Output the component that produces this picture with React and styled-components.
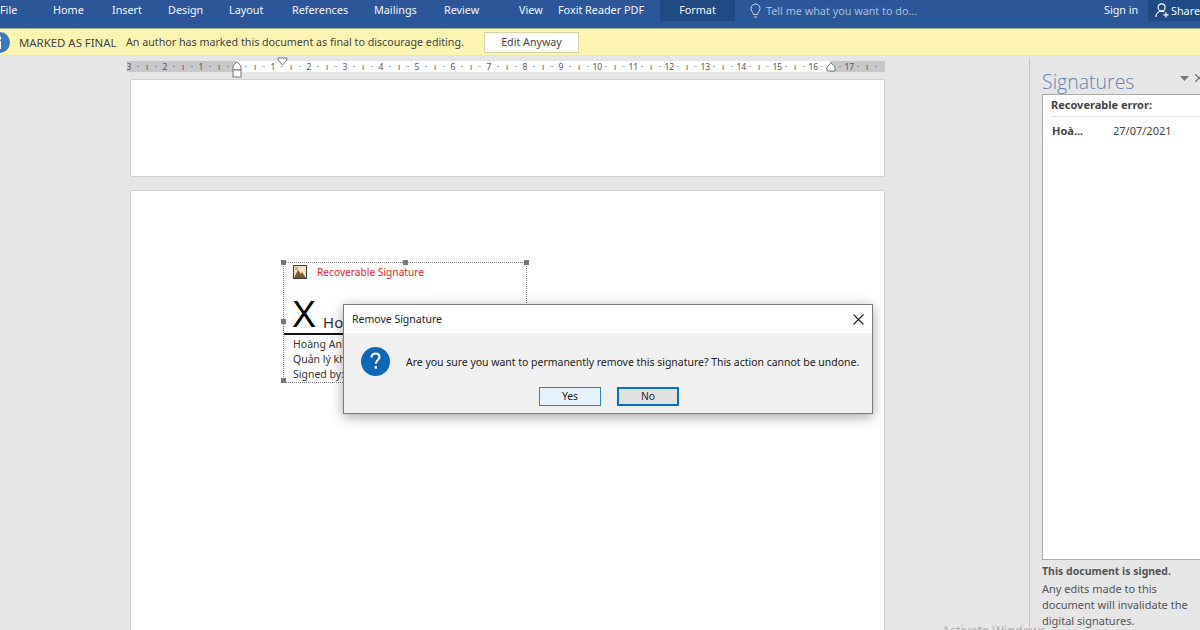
import styled, { createGlobalStyle } from "styled-components";

const GlobalStyle = createGlobalStyle`
  html, body { margin: 0; padding: 0; background: #e6e6e6; }
  * { box-sizing: border-box; }
`;

const Window = styled.div`
  position: relative;
  width: 1200px;
  height: 630px;
  overflow: hidden;
  display: flex;
  flex-direction: column;
  background: #e6e6e6;
  font-family: "Noto Sans", "Liberation Sans", sans-serif;
  color: #444;
`;

// ribbon tabs
const TabBar = styled.div`
  flex: none;
  height: 28px;
  display: flex;
  align-items: flex-start;
  background: #2b579a;
  color: #f2f5fa;
  font-size: 10.8px;
`;

const Tab = styled.div`
  flex: none;
  width: ${(props) => props.$w}px;
  height: 21px;
  line-height: 20px;
  white-space: nowrap;
  text-align: ${(props) => (props.$active ? "center" : "left")};
  background: ${(props) => (props.$active ? "#1f4a85" : "transparent")};
`;

const TellMe = styled.div`
  flex: 1;
  display: flex;
  align-items: center;
  gap: 5px;
  height: 21px;
  padding-left: 15px;
  color: #a9bcd8;
`;

const SignIn = styled.div`
  flex: none;
  width: 44px;
  line-height: 20px;
`;

const Share = styled.div`
  flex: none;
  width: 52px;
  height: 21px;
  display: flex;
  align-items: center;
  gap: 2px;
  padding-left: 7px;
  background: #1f4a85;
`;

// yellow message bar
const MessageBar = styled.div`
  flex: none;
  height: 28px;
  display: flex;
  align-items: center;
  background: #fcf5b1;
  border-top: 1px solid #9db08c;
  border-bottom: 1px solid #efe8a8;
  font-size: 10.7px;
  color: #444;
`;

const InfoIcon = styled.svg`
  flex: none;
  width: 21px;
  height: 21px;
  margin-left: -11px;
  margin-right: 9px;
`;

const FinalLabel = styled.span`
  width: 107px;
  white-space: nowrap;
  font-size: 11.4px;
`;

const FinalText = styled.span`
  width: 358px;
  white-space: nowrap;
`;

const EditButton = styled.div`
  width: 95px;
  height: 21px;
  line-height: 19px;
  text-align: center;
  background: #fff;
  border: 1px solid #d9d4a6;
`;

const Main = styled.div`
  flex: 1;
  min-height: 0;
  display: flex;
`;

const Work = styled.div`
  flex: none;
  width: 1029px;
  display: flex;
  flex-direction: column;
`;

const RulerRow = styled.div`
  position: relative;
  flex: none;
  height: 23px;
  padding: 5px 0 0 127px;
`;

const Ruler = styled.div`
  width: 758px;
  height: 11px;
  overflow: hidden;
  display: flex;
  background: linear-gradient(to right, #c8c8c8 109px, #fff 109px, #fff 703px, #c8c8c8 703px);
  font-size: 8.5px;
  line-height: 11px;
  color: #555;
`;

const RulerTrack = styled.div`
  flex: none;
  display: flex;
  margin-left: -2.5px;
`;

const RulerCell = styled.div`
  flex: none;
  width: 36px;
  display: grid;
  grid-template-columns: repeat(4, 9px);
  text-align: center;
`;

const Marker = styled.svg`
  position: absolute;
  left: ${(props) => props.$x}px;
  top: ${(props) => props.$y}px;
`;

const Pages = styled.div`
  flex: 1;
  min-height: 0;
  overflow: hidden;
  display: flex;
  flex-direction: column;
  gap: 13px;
  padding-left: 130px;
`;

const Page = styled.div`
  flex: none;
  width: 755px;
  height: ${(props) => props.$h}px;
  background: #fff;
  border: 1px solid #d2d2d2;
`;

const SecondPage = styled(Page)`
  padding: 71px 0 0 152px;
`;

const SigBox = styled.div`
  position: relative;
  width: 244px;
  height: 121px;
  border: 1px dotted #808080;
  display: flex;
  flex-direction: column;
`;

const Handle = styled.span`
  position: absolute;
  width: 5px;
  height: 5px;
  background: #777;
  left: ${(props) => props.$x}px;
  top: ${(props) => props.$y}px;
`;

const SigHead = styled.div`
  display: flex;
  align-items: center;
  gap: 10px;
  height: 18px;
  margin: 0 0 0 9px;
  font-size: 10.2px;
  color: #e8202f;
`;

const SigLine = styled.div`
  height: 54px;
  padding: 0 0 0 8px;
  display: flex;
  align-items: flex-end;
  gap: 7px;
  border-bottom: 2px solid #111;
  color: #222;
`;

const BigX = styled.span`
  font-size: 36px;
  line-height: 36px;
  color: #000;
  font-family: "Liberation Sans", sans-serif;
`;

const SigName = styled.span`
  font-size: 15px;
  line-height: 22px;
  color: #333;
`;

const SigMeta = styled.div`
  padding: 2px 0 0 9px;
  font-size: 10.5px;
  line-height: 15px;
  color: #333;
`;

// right task pane
const Pane = styled.div`
  flex: 1;
  min-width: 0;
  margin-top: 2px;
  display: flex;
  flex-direction: column;
  padding-left: 12px;
  border-left: 1px solid #c6c6c6;
`;

const PaneHead = styled.div`
  flex: none;
  height: 36px;
  display: flex;
  align-items: flex-end;
  justify-content: space-between;
  white-space: nowrap;
`;

const PaneTitle = styled.div`
  font-size: 19.5px;
  line-height: 28px;
  margin-bottom: -2px;
  font-weight: 300;
  color: #6484b4;
  font-family: "Open Sans", sans-serif;
`;

const PaneTools = styled.div`
  display: flex;
  gap: 6px;
  margin: 0 -3px 12px 0;
  align-items: center;
`;

const SigList = styled.div`
  flex: none;
  height: 466px;
  margin-right: -1px;
  background: #fff;
  border: 1px solid #ababab;
  padding: 0 0 0 8px;
  font-size: 11px;
  color: #444;
`;

const ListHead = styled.div`
  height: 22px;
  line-height: 19px;
  font-weight: 700;
  border-bottom: 1px solid #e6e6e6;
`;

const ListRow = styled.div`
  display: flex;
  padding: 6px 0 0 1px;
  line-height: 16px;
`;

const ListName = styled.span`
  width: 61px;
  font-weight: 700;
`;

const PaneNote = styled.div`
  padding-top: 3px;
  font-size: 11px;
  line-height: 16px;
  color: #555;
`;

const NoteHead = styled.div`
  font-weight: 700;
  font-size: 10.5px;
  margin-bottom: 2px;
  white-space: nowrap;
`;

const Watermark = styled.div`
  position: absolute;
  left: 942px;
  top: 622px;
  font-size: 12px;
  color: #b0b0b0;
  letter-spacing: 0.3px;
`;

// modal dialog
const Dialog = styled.div`
  position: absolute;
  left: 343px;
  top: 304px;
  width: 530px;
  height: 110px;
  display: flex;
  flex-direction: column;
  background: #f0f0f0;
  border: 1px solid #7c7c7c;
  box-shadow: 0 3px 12px rgba(0, 0, 0, 0.35);
`;

const DialogTitle = styled.div`
  flex: none;
  height: 28px;
  display: flex;
  align-items: center;
  justify-content: space-between;
  padding: 0 8px;
  background: #fff;
  font-size: 10.5px;
  color: #222;
`;

const DialogBody = styled.div`
  flex: none;
  height: 54px;
  display: flex;
  align-items: center;
  padding: 3px 0 0 17px;
  gap: 16px;
  font-size: 10.46px;
  color: #222;
  white-space: nowrap;
`;

const DialogButtons = styled.div`
  display: flex;
  justify-content: center;
  gap: 16px;
  padding-left: 2px;
`;

const DialogButton = styled.div`
  width: 62px;
  height: 19px;
  text-align: center;
  font-size: 10.3px;
  color: #222;
  background: ${(props) => (props.$focus ? "#e1e1e1" : "#e5f1fb")};
  border: ${(props) => (props.$focus ? "2px solid #0a6fc9" : "1px solid #2a86d0")};
  line-height: ${(props) => (props.$focus ? "15px" : "17px")};
`;

const tabs = [
  ["File", 53],
  ["Home", 59],
  ["Insert", 56],
  ["Design", 61],
  ["Layout", 63],
  ["References", 82],
  ["Mailings", 70],
  ["Review", 75],
  ["View", 39],
  ["Foxit Reader PDF", 102],
];

// -3 .. 17, zero has no number
const rulerUnits = Array.from({ length: 21 }, (_, i) => i - 3);

function App() {
  return (
    <Window>
      <GlobalStyle />
      <TabBar>
        {tabs.map(([name, w]) => (
          <Tab key={name} $w={w}>{name}</Tab>
        ))}
        <Tab $w={75} $active>Format</Tab>
        <TellMe>
          <svg width="11" height="16" viewBox="0 0 11 16" fill="none" stroke="#c5d2e6" strokeWidth="1">
            <path d="M5.5 1a4.5 4.5 0 0 0-4.5 4.5c0 2.2 2 3.5 2.5 6h4c.5-2.5 2.5-3.8 2.5-6A4.5 4.5 0 0 0 5.5 1z" />
            <path d="M4 14h3" />
          </svg>
          Tell me what you want to do...
        </TellMe>
        <SignIn>Sign in</SignIn>
        <Share>
          <svg width="16" height="17" viewBox="0 0 16 17" fill="none" stroke="#fff" strokeWidth="1.3">
            <circle cx="7.5" cy="5" r="4" />
            <path d="M1 16c.3-3.8 2.8-6.8 6.5-6.8 1.2 0 2.2.3 3 .9" />
            <path d="M9.5 13.5h6M12.5 10.5v6" />
          </svg>
          Share
        </Share>
      </TabBar>

      <MessageBar>
        <InfoIcon viewBox="0 0 21 21">
          <circle cx="10.5" cy="10.5" r="10.5" fill="#3f78b8" />
          <rect x="9" y="9" width="3" height="8" fill="#fff" />
          <rect x="9" y="4.5" width="3" height="3" fill="#fff" />
        </InfoIcon>
        <FinalLabel>MARKED AS FINAL</FinalLabel>
        <FinalText>An author has marked this document as final to discourage editing.</FinalText>
        <EditButton>Edit Anyway</EditButton>
      </MessageBar>

      <Main>
        <Work>
          <RulerRow>
            <Ruler>
              <RulerTrack>
                {rulerUnits.map((n) => (
                  <RulerCell key={n}>
                    <span>{n === 0 ? "" : Math.abs(n)}</span>
                    <span>·</span>
                    <span>ı</span>
                    <span>·</span>
                  </RulerCell>
                ))}
              </RulerTrack>
            </Ruler>
            <Marker $x={232} $y={5} width="10" height="18" viewBox="0 0 10 18" fill="#fff" stroke="#777">
              <path d="M5 .8 9 5v4H1V5z" />
              <rect x="1" y="9" width="8" height="7" />
            </Marker>
            <Marker $x={277} $y={1} width="11" height="9" viewBox="0 0 11 9" fill="#fff" stroke="#777">
              <path d="M1 1h9v2L5.5 8 1 3z" />
            </Marker>
            <Marker $x={826} $y={6} width="10" height="10" viewBox="0 0 10 10" fill="#fff" stroke="#777">
              <path d="M5 .8 9 5v4H1V5z" />
            </Marker>
          </RulerRow>
          <Pages>
            <Page $h={98} />
            <SecondPage $h={460}>
              <SigBox>
                <Handle $x={-3} $y={-3} />
                <Handle $x={119} $y={-3} />
                <Handle $x={240} $y={-3} />
                <Handle $x={-3} $y={56} />
                <Handle $x={-3} $y={115} />
                <SigHead>
                  <svg width="14" height="14" viewBox="0 0 14 14">
                    <rect x="0.5" y="0.5" width="13" height="13" fill="#efe3c4" stroke="#3a3a3a" />
                    <path d="M1 13 5 5l3 4 1-2 4 6z" fill="#7a5a32" />
                    <rect x="2" y="2" width="3" height="3" fill="#d8a860" />
                  </svg>
                  Recoverable Signature
                </SigHead>
                <SigLine>
                  <BigX>X</BigX>
                  <SigName>Hoàng Anh</SigName>
                </SigLine>
                <SigMeta>
                  <div>Hoàng Anh</div>
                  <div>Quản lý kho</div>
                  <div>Signed by: Hoàng Anh</div>
                </SigMeta>
              </SigBox>
            </SecondPage>
          </Pages>
        </Work>

        <Pane>
          <PaneHead>
            <PaneTitle>Signatures</PaneTitle>
            <PaneTools>
              <svg width="9" height="5" viewBox="0 0 9 5"><path d="M0 0h9L4.5 5z" fill="#777" /></svg>
              <svg width="8" height="8" viewBox="0 0 8 8" stroke="#666" strokeWidth="1.2"><path d="M0 0l8 8M8 0 0 8" /></svg>
            </PaneTools>
          </PaneHead>
          <SigList>
            <ListHead>Recoverable error:</ListHead>
            <ListRow>
              <ListName>Hoà...</ListName>
              <span>27/07/2021</span>
            </ListRow>
          </SigList>
          <PaneNote>
            <NoteHead>This document is signed.</NoteHead>
            Any edits made to this<br />
            document will invalidate the<br />
            digital signatures.
          </PaneNote>
        </Pane>
      </Main>

      <Watermark>Activate Windows</Watermark>

      <Dialog>
        <DialogTitle>
          Remove Signature
          <svg width="11" height="11" viewBox="0 0 11 11" stroke="#222" strokeWidth="1.1"><path d="M.5.5l10 10M10.5.5l-10 10" /></svg>
        </DialogTitle>
        <DialogBody>
          <svg width="29" height="29" viewBox="0 0 29 29">
            <circle cx="14.5" cy="14.5" r="14.5" fill="#0f67b5" />
            <path d="M10.5 10.5c0-2.6 1.8-4 4-4s4 1.4 4 3.6c0 3-3.7 3-3.7 6.6" fill="none" stroke="#fff" strokeWidth="2" />
            <rect x="13.7" y="19" width="2.3" height="2.6" fill="#fff" />
          </svg>
          Are you sure you want to permanently remove this signature? This action cannot be undone.
        </DialogBody>
        <DialogButtons>
          <DialogButton>Yes</DialogButton>
          <DialogButton $focus>No</DialogButton>
        </DialogButtons>
      </Dialog>
    </Window>
  );
}

export default App;
